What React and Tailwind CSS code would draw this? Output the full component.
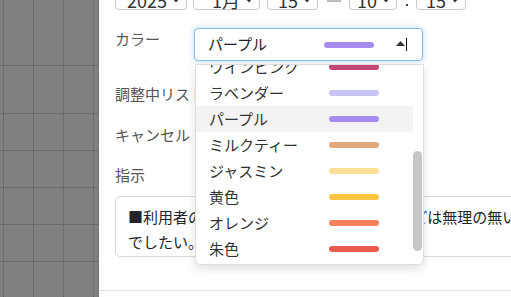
import React from "react";

const font = { fontFamily: '"Noto Sans CJK JP", "Noto Sans", sans-serif' };

const rows = [66, 48, 37, 37, 37, 37, 40];

function LeftGrid() {
  return (
    <div className="w-[99px] h-[297px] shrink-0 bg-[#808080] flex flex-col overflow-hidden border-r border-[#747474]">
      {rows.map((h, i) => (
        <div key={i} className="flex shrink-0 border-b border-[#6b6b6b]" style={{ height: h }}>
          <div className="w-[3px] h-full" />
          <div className="w-[30px] h-full border-l border-dotted border-[#5f5f5f]" />
          <div className="w-[30px] h-full border-l border-[#6b6b6b]" />
          <div className="w-[30px] h-full border-l border-dotted border-[#5f5f5f]" />
          <div className="flex-1 h-full border-l border-dotted border-[#5f5f5f]" />
        </div>
      ))}
    </div>
  );
}

function Chev() {
  return (
    <svg width="8" height="5" viewBox="0 0 8 5" className="shrink-0">
      <path d="M0.5 0.5 L7.5 0.5 L4 4.5 Z" fill="#333" />
    </svg>
  );
}

function SmallSelect({ w, text }) {
  return (
    <div
      className="h-[30px] border border-[#c9c9c9] rounded-[4px] flex items-end justify-end gap-[5px] pr-[6px] pb-[0px] text-[18px] leading-[18px] text-[#333]"
      style={{ width: w }}
    >
      <span>{text}</span>
      <span className="mb-[6px]"><Chev /></span>
    </div>
  );
}

const items = [
  ["ワインピンク", "#c14676"],
  ["ラベンダー", "#c8c4f4"],
  ["パープル", "#a68bf0"],
  ["ミルクティー", "#e2a97e"],
  ["ジャスミン", "#fddf96"],
  ["黄色", "#f9c440"],
  ["オレンジ", "#f5825a"],
  ["朱色", "#e95c52"],
];

export default function App() {
  return (
    <div className="flex w-[511px] h-[297px] overflow-hidden bg-white" style={font}>
      <LeftGrid />
      <div className="relative flex-1 bg-white">
        <div className="pl-[16px] mt-[-20px] flex flex-col">
          {/* date row */}
          <div className="flex items-end h-[30px]">
            <SmallSelect w={72} text="2025" />
            <div className="w-[6px]" />
            <SmallSelect w={67} text="1月" />
            <div className="w-[7px]" />
            <SmallSelect w={51} text="15" />
            <div className="w-[31px] flex justify-center">
              <div className="w-[14px] h-[2px] bg-[#bbb] mb-[8px]" />
            </div>
            <SmallSelect w={48} text="10" />
            <div className="w-[19px] flex justify-center">
              <div className="w-[2px] h-[2px] bg-[#444] mb-[4px]" />
            </div>
            <SmallSelect w={50} text="15" />
          </div>

          {/* color row */}
          <div className="flex mt-[18px]">
            <div className="w-[79px] text-[15px] leading-6 text-[#555] mt-[-1px]">カラー</div>
            <div className="w-[229px] h-[33px] border border-[#7db9ec] rounded-[4px] shadow-[0_0_4px_2px_rgba(120,180,240,0.25)] flex items-center pl-[13px] text-[15px] text-[#222]">
              <span className="w-[116px]">パープル</span>
              <span className="w-[50px] h-[6px] rounded-full bg-[#a68bf0]" />
              <svg width="9" height="5" viewBox="0 0 9 5" className="ml-[22px] mt-[-3px]">
                <path d="M0 5 L4.5 0 L9 5 Z" fill="#333" />
              </svg>
              <span className="w-[1px] h-[13px] bg-[#111] ml-[1px]" />
            </div>
          </div>

          <div className="mt-[21px] text-[15px] leading-6 text-[#555]">調整中リスト</div>
          <div className="mt-[17px] text-[15px] leading-6 text-[#555]">キャンセル</div>
          <div className="mt-[16px] text-[15px] leading-6 text-[#555]">指示</div>

          <div className="mt-[9px] h-[61px] w-[420px] border border-[#d9d9d9] rounded-[5px] overflow-hidden pl-[12px] pt-[7px] text-[15px] leading-[25px] text-[#212529] whitespace-nowrap">
            <div>■利用者の体調に合わせて、入浴や外出などは無理の無い範囲で</div>
            <div>でしたい。</div>
            <div>■利用者のことについて、状況を確認し回復の様子</div>
          </div>
        </div>

        <div className="absolute left-0 right-0 top-[290px] border-t border-[#e3e3e3]" />

        {/* dropdown */}
        <div className="absolute left-[96px] top-[64px] w-[229px] h-[201px] bg-white border border-[#dedede] rounded-b-[5px] shadow-[0_4px_10px_rgba(0,0,0,0.12)] overflow-hidden">
          <div className="mt-[-11px] pr-[10px] flex flex-col">
            {items.map(([name, c]) => (
              <div
                key={name}
                className={`h-[26px] flex items-center pl-[13px] text-[15px] text-[#333] ${name === "パープル" ? "bg-[#f3f3f3]" : ""}`}
              >
                <span className="w-[120px] whitespace-nowrap">{name}</span>
                <span className="w-[50px] h-[6px] rounded-full" style={{ background: c }} />
              </div>
            ))}
          </div>
          <div className="absolute right-[1px] top-[86px] w-[9px] h-[100px] rounded-full bg-[#c6c6c6]" />
        </div>
      </div>
    </div>
  );
}
